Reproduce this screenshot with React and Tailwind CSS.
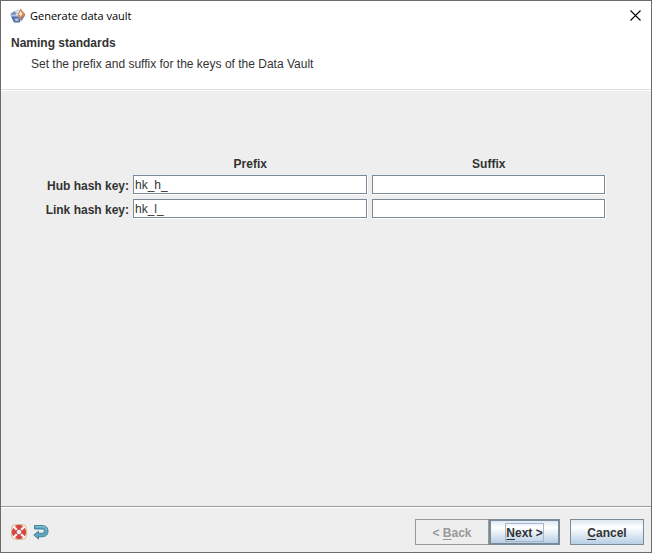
import { useState } from 'react'

const ROWS = [
  { id: 'hub', label: 'Hub hash key:', prefix: 'hk_h_', suffix: '' },
  { id: 'link', label: 'Link hash key:', prefix: 'hk_l_', suffix: '' },
]

function AppIcon() {
  return (
    <svg width="18" height="16" viewBox="0 0 18 16" aria-hidden="true">
      <path d="M1 6 5.500 3 9 5 4.500 8z" fill="#7f97c0" />
      <path d="M5.500 3 10.500 1 9 7z" fill="#d4dcea" />
      <path d="M0.500 7H8.500l1 2H3z" fill="#b9c5dc" />
      <path d="M2 8.500 10 8.500 12.500 10 10.500 14.500H5z" fill="#5070a8" />
      <path d="M5.500 10.500h4.500L9 13H6.500z" fill="#b5c3dc" />
      <path d="M11.500 0.500 16.500 6.500 12 13 8.500 7z" fill="#d8894f" />
      <path d="M11.500 3 13.500 6 11.500 8.500 10 6z" fill="#f8e6d8" />
      <path d="M12 9.500 16.500 6.500 12.500 13.500z" fill="#7587aa" />
    </svg>
  )
}

function HelpIcon() {
  return (
    <svg width="16" height="16" viewBox="0 0 16 16" aria-hidden="true">
      <rect x="0.500" y="0.500" width="15" height="15" rx="4" fill="#f0ead6" stroke="#d2c596" />
      <circle cx="8" cy="8" r="5" fill="none" stroke="#d94343" strokeWidth="4.400" />
      <g stroke="#f8f5f0" strokeWidth="2.400">
        <path d="M2.500 2.500 6 6M13.500 2.500 10 6M2.500 13.500 6 10M13.500 13.500 10 10" />
      </g>
      <circle cx="8" cy="8" r="2.800" fill="#eeeeee" stroke="#b23c3c" strokeWidth="0.800" />
    </svg>
  )
}

function ResetIcon() {
  return (
    <svg width="16" height="16" viewBox="0 0 16 16" aria-hidden="true">
      <path
        d="M1.500 1.500H9C13 1.500 15 3.800 15 7.200S12.800 12.800 9 12.800H5.500V15L0.800 11 5.500 7.200V9.300H9c1.600 0 2.300-.8 2.300-2.200S10.500 5 9 5H1.500z"
        fill="#5ea6be"
        stroke="#3b7a92"
        strokeWidth="0.900"
      />
      <path d="M2.500 2.700H9c2.800 0 4.300 1.300 4.700 3.500" fill="none" stroke="#8fc8da" />
    </svg>
  )
}

function KeyInput({ onChange, ...props }) {
  return (
    <div className="flex min-w-0 flex-1 border-r border-b border-white">
      <input
        type="text"
        onChange={(e) => onChange(e.target.value)}
        className="h-[19px] w-full min-w-0 border border-[#7a8a99] bg-white px-px pt-px text-[#333333] outline-none"
        {...props}
      />
    </div>
  )
}

export default function App() {
  const [rows, setRows] = useState(ROWS)

  const update = (id, field, value) => {
    setRows(rows.map((row) => (row.id === id ? { ...row, [field]: value } : row)))
  }

  return (
    <div className="flex min-h-screen flex-col border border-[#6b6b6b] bg-[#eeeeee] font-['Liberation_Sans',Arial,sans-serif] text-[12px] leading-[16px] text-[#333333]">
      <header className="border-b border-[#dddddd] bg-white pb-[17px]">
        <div className="flex h-[29px] items-center pl-2 text-black">
          <AppIcon />
          <h1 className="ml-[3px] flex-1 font-['Open_Sans','Segoe_UI',sans-serif] text-[11px]">Generate data vault</h1>
          <button type="button" aria-label="Close" className="flex h-7 w-8 items-center justify-center">
            <svg width="11" height="11" viewBox="0 0 11 11" stroke="#000" strokeWidth="1.100">
              <path d="M.5 .5 10.500 10.500M10.500 .5 .5 10.500" />
            </svg>
          </button>
        </div>
        <h2 className="mt-[5px] pl-[10px] font-bold">Naming standards</h2>
        <p className="mt-[5px] pl-[30px]">Set the prefix and suffix for the keys of the Data Vault</p>
      </header>

      <main className="flex-1 border-t border-white pt-[65px] pr-[45px] pl-10">
        <div className="flex gap-1 font-bold">
          <span className="w-[88px]" />
          <span className="flex-1 text-center">Prefix</span>
          <span className="flex-1 text-center">Suffix</span>
        </div>
        <div className="mt-[3px] flex flex-col gap-1">
          {rows.map((row) => (
            <div key={row.id} className="flex items-center gap-1">
              <label htmlFor={`${row.id}-prefix`} className="w-[88px] pt-px text-right font-bold whitespace-nowrap">
                {row.label}
              </label>
              <KeyInput id={`${row.id}-prefix`} value={row.prefix} onChange={(v) => update(row.id, 'prefix', v)} />
              <KeyInput aria-label={`${row.label} suffix`} value={row.suffix} onChange={(v) => update(row.id, 'suffix', v)} />
            </div>
          ))}
        </div>
      </main>

      <footer className="border-t border-[#9a9f9a]">
        <div className="flex items-center border-t border-white pt-[11px] pr-[7px] pb-[7px] pl-[10px]">
          <button type="button" aria-label="Help">
            <HelpIcon />
          </button>
          <button type="button" aria-label="Reset" className="ml-[6px]">
            <ResetIcon />
          </button>
          <div className="ml-auto flex font-bold">
            <button type="button" disabled className="h-[26px] w-[74px] border border-[#999999] pt-px text-[#999999]">
              &lt; <u className="underline-offset-2">B</u>ack
            </button>
            <button
              type="button"
              className="flex h-[26px] w-[71px] items-center justify-center border-2 border-[#7a8a99] bg-linear-to-b from-[#dde8f3] via-white via-30% to-[#b8cfe5]"
            >
              <span className="border border-[#a3b8cc] pt-px">
                <u className="underline-offset-2">N</u>ext &gt;
              </span>
            </button>
          </div>
          <button
            type="button"
            className="ml-[10px] h-[26px] w-[74px] border border-[#7a8a99] bg-linear-to-b from-[#dde8f3] via-white via-30% to-[#b8cfe5] pt-px font-bold"
          >
            <u className="underline-offset-2">C</u>ancel
          </button>
        </div>
      </footer>
    </div>
  )
}
